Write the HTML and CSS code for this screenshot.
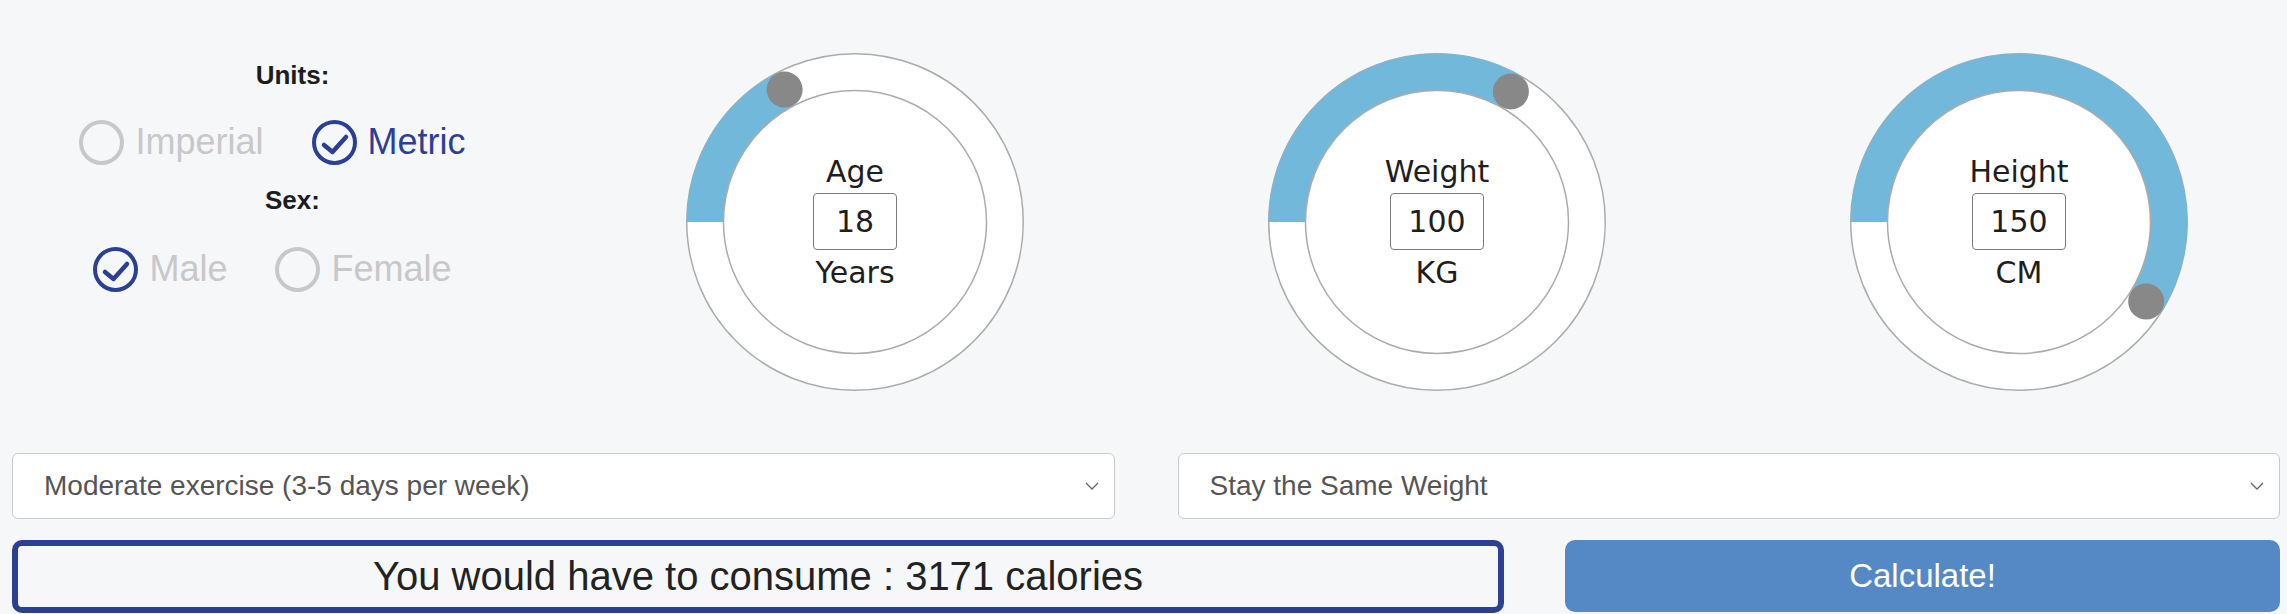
FILE: index.html
```html
<!DOCTYPE html>
<html lang="en">
<head>
<meta charset="utf-8">
<title>Calorie Calculator</title>
<link rel="stylesheet" href="styles.css">
</head>
<body>
<div class="page">
  <div class="top">
    <div class="options">
      <div class="label label-units">Units:</div>
      <div class="radio-row">
        <div class="radio off">
          <svg class="radio-icon" viewBox="0 0 45 45"><circle cx="22.5" cy="22.5" r="20.5" fill="none" stroke="#c8c8c8" stroke-width="4"/></svg>
          <span>Imperial</span>
        </div>
        <div class="radio on">
          <svg class="radio-icon" viewBox="0 0 45 45"><circle cx="22.5" cy="22.5" r="20.5" fill="none" stroke="#2b3f95" stroke-width="4"/><polyline points="12,25 20.5,32 34,17" fill="none" stroke="#2b3f95" stroke-width="4.5" stroke-linecap="round" stroke-linejoin="round"/></svg>
          <span>Metric</span>
        </div>
      </div>
      <div class="label label-sex">Sex:</div>
      <div class="radio-row row-sex">
        <div class="radio off">
          <svg class="radio-icon" viewBox="0 0 45 45"><circle cx="22.5" cy="22.5" r="20.5" fill="none" stroke="#2b3f95" stroke-width="4"/><polyline points="12,25 20.5,32 34,17" fill="none" stroke="#2b3f95" stroke-width="4.5" stroke-linecap="round" stroke-linejoin="round"/></svg>
          <span>Male</span>
        </div>
        <div class="radio off">
          <svg class="radio-icon" viewBox="0 0 45 45"><circle cx="22.5" cy="22.5" r="20.5" fill="none" stroke="#c8c8c8" stroke-width="4"/></svg>
          <span>Female</span>
        </div>
      </div>
    </div>

    <div class="dials">
      <div class="dial">
        <svg class="dial-svg" viewBox="0 0 338 338" width="338" height="338">
          <circle cx="169" cy="169" r="168.25" fill="#fff" stroke="#ababab" stroke-width="1.5"/>
          <path d="M 19 169 A 150 150 0 0 1 98.6 36.6" fill="none" stroke="#72b8db" stroke-width="37"/>
          <circle cx="169" cy="169" r="131.5" fill="#fff" stroke="#ababab" stroke-width="1.5"/>
          <circle cx="98.6" cy="36.6" r="18" fill="#888"/>
        </svg>
        <div class="dial-body">
          <div class="dial-label">Age</div>
          <div class="dial-input">18</div>
          <div class="dial-unit">Years</div>
        </div>
      </div>
      <div class="dial">
        <svg class="dial-svg" viewBox="0 0 338 338" width="338" height="338">
          <circle cx="169" cy="169" r="168.25" fill="#fff" stroke="#ababab" stroke-width="1.5"/>
          <path d="M 19 169 A 150 150 0 0 1 242.9 38.4" fill="none" stroke="#72b8db" stroke-width="37"/>
          <circle cx="169" cy="169" r="131.5" fill="#fff" stroke="#ababab" stroke-width="1.5"/>
          <circle cx="242.9" cy="38.4" r="18" fill="#888"/>
        </svg>
        <div class="dial-body">
          <div class="dial-label">Weight</div>
          <div class="dial-input">100</div>
          <div class="dial-unit">KG</div>
        </div>
      </div>
      <div class="dial">
        <svg class="dial-svg" viewBox="0 0 338 338" width="338" height="338">
          <circle cx="169" cy="169" r="168.25" fill="#fff" stroke="#ababab" stroke-width="1.5"/>
          <path d="M 19 169 A 150 150 0 1 1 296.2 248.5" fill="none" stroke="#72b8db" stroke-width="37"/>
          <circle cx="169" cy="169" r="131.5" fill="#fff" stroke="#ababab" stroke-width="1.5"/>
          <circle cx="296.2" cy="248.5" r="18" fill="#888"/>
        </svg>
        <div class="dial-body">
          <div class="dial-label">Height</div>
          <div class="dial-input">150</div>
          <div class="dial-unit">CM</div>
        </div>
      </div>
    </div>
  </div>

  <div class="selects">
    <div class="select">
      <span>Moderate exercise (3-5 days per week)</span>
      <svg class="chevron" viewBox="0 0 14 8" width="14" height="8"><polyline points="1,1 7,7 13,1" fill="none" stroke="#666" stroke-width="1.3"/></svg>
    </div>
    <div class="select">
      <span>Stay the Same Weight</span>
      <svg class="chevron" viewBox="0 0 14 8" width="14" height="8"><polyline points="1,1 7,7 13,1" fill="none" stroke="#666" stroke-width="1.3"/></svg>
    </div>
  </div>

  <div class="result-row">
    <div class="result">You would have to consume : 3171 calories</div>
    <div class="button">Calculate!</div>
  </div>
</div>
</body>
</html>
```

FILE: styles.css
```css
* { box-sizing: border-box; }

html, body {
  margin: 0;
  padding: 0;
  background: #f6f7f9;
}

body {
  font-family: "Liberation Sans", Arial, sans-serif;
  color: #222;
  width: 2287px;
  height: 614px;
  overflow: hidden;
}

.top {
  display: flex;
  height: 453px;
}

.options {
  width: 585px;
  display: flex;
  flex-direction: column;
  align-items: center;
}

.label {
  font-weight: bold;
  font-size: 26px;
  line-height: 30px;
  color: #1d1d1d;
}

.label-units { margin-top: 60px; }
.label-sex { margin-top: 20px; }

.radio-row {
  display: flex;
  gap: 48px;
  padding-right: 40px;
  margin-top: 29px;
  height: 46px;
  align-items: center;
}

.row-sex { margin-top: 31px; }

.radio {
  display: flex;
  align-items: center;
  gap: 11px;
  font-size: 36px;
  line-height: 46px;
}

.radio.off { color: #c8c8c8; }
.radio.on { color: #2b3f95; }

.radio-icon {
  width: 45px;
  height: 45px;
  display: block;
}

.dials {
  display: flex;
  gap: 244px;
  padding-left: 101px;
  padding-top: 53px;
}

.dial {
  display: grid;
  width: 338px;
  height: 338px;
}

.dial-svg {
  grid-area: 1 / 1;
  display: block;
}

.dial-body {
  grid-area: 1 / 1;
  display: flex;
  flex-direction: column;
  align-items: center;
  justify-content: center;
  font-family: "DejaVu Sans", Verdana, sans-serif;
  font-size: 30px;
  color: #1e1e1e;
}

.dial-label,
.dial-unit {
  line-height: 36px;
}

.dial-input {
  margin: 3px 0 5px;
  height: 57px;
  min-width: 84px;
  padding: 0 17px;
  border: 1.5px solid #7a7a7a;
  border-radius: 4px;
  display: flex;
  align-items: center;
  justify-content: center;
  background: #fff;
}

.selects {
  display: grid;
  grid-template-columns: 1fr 1fr;
  gap: 63px;
  padding: 0 7px 0 12px;
}

.select {
  height: 66px;
  background: #fff;
  border: 1.5px solid #cbcbcb;
  border-radius: 6px;
  display: flex;
  align-items: center;
  justify-content: space-between;
  padding: 0 15px 0 31px;
  font-size: 28px;
  color: #555;
}

.chevron { display: block; }

.result-row {
  display: grid;
  grid-template-columns: 1492px 1fr;
  gap: 61px;
  padding: 0 7px 0 12px;
  margin-top: 21px;
}

.result {
  height: 73px;
  border: 6px solid #2b3f95;
  border-radius: 10px;
  display: flex;
  align-items: center;
  justify-content: center;
  font-size: 40px;
  color: #222;
}

.button {
  height: 72px;
  background: #5589c5;
  border-radius: 10px;
  display: flex;
  align-items: center;
  justify-content: center;
  color: #fff;
  font-size: 33px;
}
```
